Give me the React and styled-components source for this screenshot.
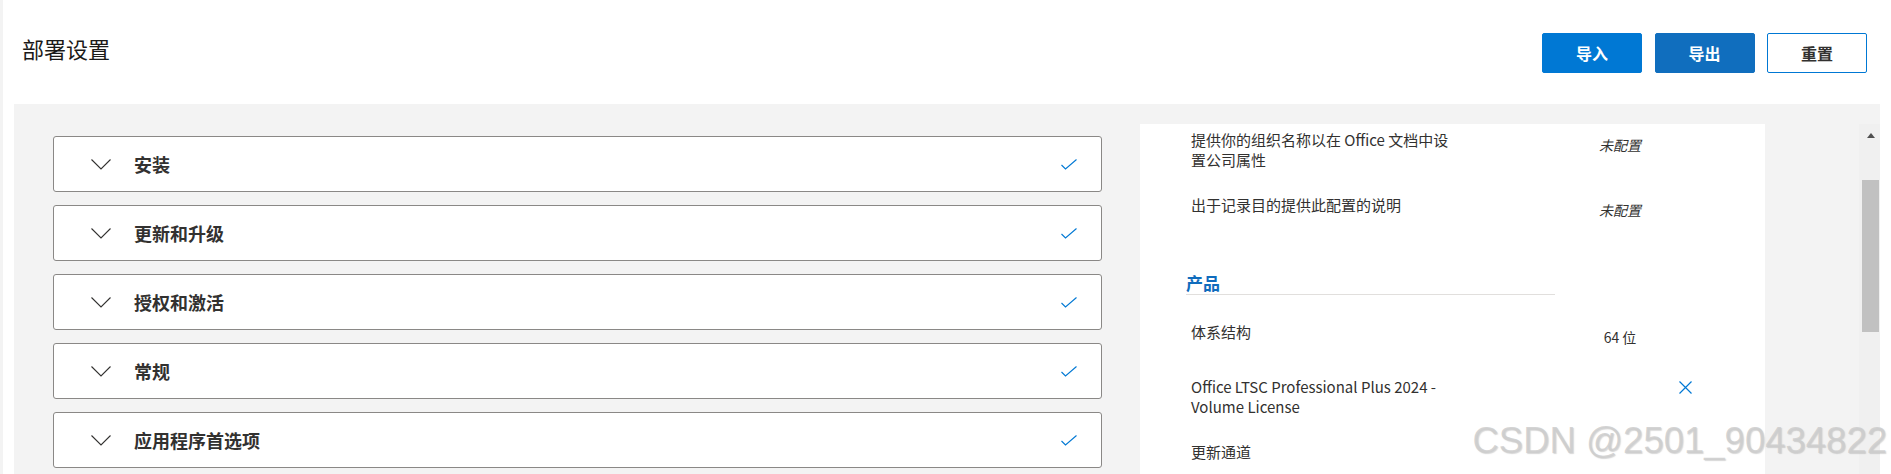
import React from 'react'
import styled, { createGlobalStyle } from 'styled-components'

const GlobalStyle = createGlobalStyle`
  html, body {
    margin: 0;
    padding: 0;
    background: #fff;
    font-family: "Noto Sans CJK SC", "Noto Sans", sans-serif;
    color: #323130;
    overflow: hidden;
  }
`

const sections = ['安装', '更新和升级', '授权和激活', '常规', '应用程序首选项']

const Page = styled.div`
  position: relative;
  height: 474px;
  border-left: 3px solid #f3f3f3;
  overflow: hidden;
`

const Header = styled.header`
  display: flex;
  align-items: flex-start;
  justify-content: space-between;
  height: 104px;
  box-sizing: border-box;
  padding: 33px 24px 0 19px;
`

const Title = styled.h1`
  margin: 0;
  font-size: 22px;
  line-height: 30px;
  font-weight: 400;
  color: #1b1a19;
`

const Actions = styled.div`
  display: flex;
  gap: 12.5px;
`

const Button = styled.button`
  width: 100px;
  height: 40px;
  border-radius: 2px;
  font-family: inherit;
  font-size: 16px;
  font-weight: 700;
  cursor: pointer;
  border: 1px solid ${p => (p.$outline ? '#0078d4' : p.$bg)};
  background: ${p => (p.$outline ? '#fff' : p.$bg)};
  color: ${p => (p.$outline ? '#323130' : '#fff')};
`

const Content = styled.div`
  display: flex;
  height: 370px;
  margin: 0 11px;
  background: #f3f3f3;
  padding-left: 39px;
  overflow: hidden;
`

const Sections = styled.div`
  display: flex;
  flex-direction: column;
  gap: 13px;
  width: 1049px;
  flex-shrink: 0;
  padding-top: 32px;
  margin-right: 38px;
`

const Card = styled.div`
  display: flex;
  align-items: center;
  height: 56px;
  box-sizing: border-box;
  border: 1px solid #8a8886;
  border-radius: 3px;
  background: #fff;
  padding: 0 24px 0 37px;
`

const CardTitle = styled.span`
  flex: 1;
  margin-left: 23px;
  font-size: 18px;
  font-weight: 700;
  color: #323130;
`

const Panel = styled.div`
  display: flex;
  flex-direction: column;
  align-items: flex-start;
  width: 625px;
  flex-shrink: 0;
  margin-top: 20px;
  background: #fff;
  box-sizing: border-box;
  padding: 6px 0 0 46px;
`

const Row = styled.div`
  display: grid;
  grid-template-columns: 262px 127px 80px 50px;
  align-items: start;
  padding-left: 5px;
  margin-bottom: 25px;
`

const Label = styled.div`
  font-size: 15px;
  line-height: 20px;
  color: #323130;
`

const Value = styled.div`
  grid-column: 3;
  padding: 5px 0;
  font-size: 14px;
  line-height: 20px;
  text-align: center;
  font-style: ${p => (p.$italic ? 'italic' : 'normal')};
  color: #323130;
`

const Action = styled.div`
  grid-column: 4;
  display: flex;
  justify-content: center;
  align-items: center;
  height: 20px;
`

const SectionHead = styled.div`
  width: 369px;
  margin: 22px 0 27px;
  font-size: 17px;
  line-height: 22px;
  font-weight: 700;
  color: #0f6cbd;
  border-bottom: 1px solid #e1dfdd;
`

const Gutter = styled.div`
  flex: 1;
`

const Scrollbar = styled.div`
  width: 21px;
  margin-top: 20px;
  background: #f0f0f0;
  display: flex;
  flex-direction: column;
  align-items: center;
`

const Arrow = styled.div`
  margin: 9px 0 0 2px;
  width: 0;
  height: 0;
  border-left: 4.5px solid transparent;
  border-right: 4.5px solid transparent;
  border-bottom: 5px solid #505050;
`

const Thumb = styled.div`
  margin: 42px 0 0 2px;
  width: 17px;
  height: 152px;
  background: #c1c1c1;
`

const Watermark = styled.div`
  position: absolute;
  right: 4px;
  top: 420px;
  font-family: "Liberation Sans", Arial, sans-serif;
  font-size: 36.5px;
  color: rgba(205, 205, 205, 0.85);
  text-shadow: 1px 1px 1px rgba(140, 140, 140, 0.35);
  pointer-events: none;
  white-space: nowrap;
`

const Chevron = () => (
  <svg width="20" height="11" viewBox="0 0 20 11">
    <path d="M0.5 0.5 L10 10 L19.5 0.5" fill="none" stroke="#323130" strokeWidth="1.1" />
  </svg>
)

const Check = () => (
  <svg width="16" height="11" viewBox="0 0 16 11">
    <path d="M0.5 6 L4.5 10 L15.5 0.5" fill="none" stroke="#0078d4" strokeWidth="1.1" />
  </svg>
)

const Close = () => (
  <svg width="13" height="13" viewBox="0 0 13 13">
    <path d="M0.5 0.5 L12.5 12.5 M12.5 0.5 L0.5 12.5" fill="none" stroke="#0078d4" strokeWidth="1.2" />
  </svg>
)

const App = () => {
  return (
    <Page>
      <GlobalStyle />
      <Header>
        <Title>部署设置</Title>
        <Actions>
          <Button $bg="#0078d4">导入</Button>
          <Button $bg="#106ebe">导出</Button>
          <Button $outline>重置</Button>
        </Actions>
      </Header>
      <Content>
        <Sections>
          {sections.map(name => (
            <Card key={name}>
              <Chevron />
              <CardTitle>{name}</CardTitle>
              <Check />
            </Card>
          ))}
        </Sections>
        <Panel>
          <Row>
            <Label>提供你的组织名称以在 Office 文档中设置公司属性</Label>
            <Value $italic>未配置</Value>
          </Row>
          <Row>
            <Label>出于记录目的提供此配置的说明</Label>
            <Value $italic>未配置</Value>
          </Row>
          <SectionHead>产品</SectionHead>
          <Row>
            <Label>体系结构</Label>
            <Value>64 位</Value>
          </Row>
          <Row>
            <Label>Office LTSC Professional Plus 2024 - Volume License</Label>
            <Action>
              <Close />
            </Action>
          </Row>
          <Row>
            <Label>更新通道</Label>
          </Row>
        </Panel>
        <Gutter />
        <Scrollbar>
          <Arrow />
          <Thumb />
        </Scrollbar>
      </Content>
      <Watermark>CSDN @2501_90434822</Watermark>
    </Page>
  )
}

export default App
